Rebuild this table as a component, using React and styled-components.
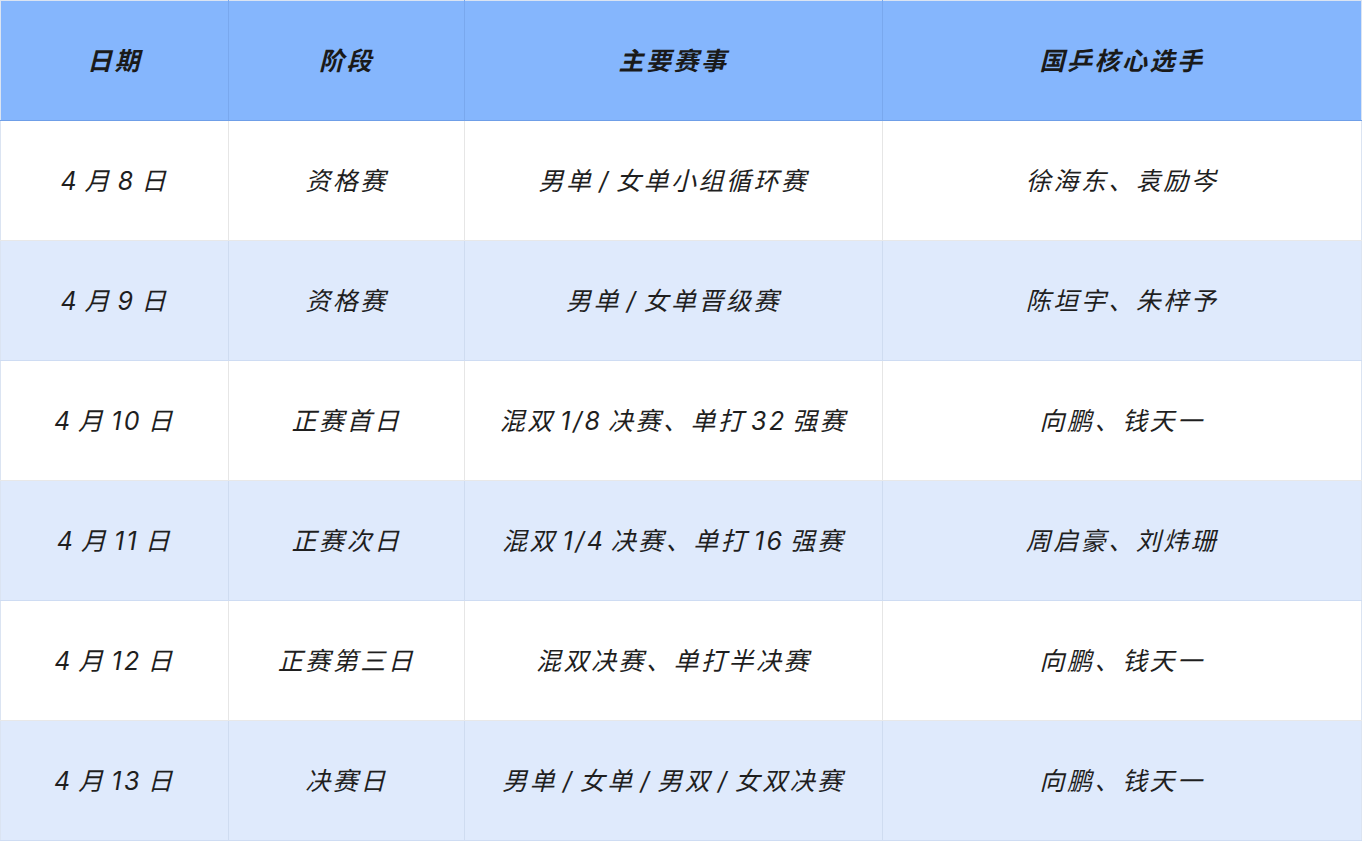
import React from 'react';
import styled, { createGlobalStyle } from 'styled-components';

const rows = [
    { date: '4 月 8 日', stage: '资格赛', event: '男单 / 女单小组循环赛', players: '徐海东、袁励岑' },
    { date: '4 月 9 日', stage: '资格赛', event: '男单 / 女单晋级赛', players: '陈垣宇、朱梓予' },
    { date: '4 月 10 日', stage: '正赛首日', event: '混双 1/8 决赛、单打 32 强赛', players: '向鹏、钱天一' },
    { date: '4 月 11 日', stage: '正赛次日', event: '混双 1/4 决赛、单打 16 强赛', players: '周启豪、刘炜珊' },
    { date: '4 月 12 日', stage: '正赛第三日', event: '混双决赛、单打半决赛', players: '向鹏、钱天一' },
    { date: '4 月 13 日', stage: '决赛日', event: '男单 / 女单 / 男双 / 女双决赛', players: '向鹏、钱天一' },
];

const App = () => {
    return (
        <>
            <GlobalStyle />
            <StyledTable>
                <colgroup>
                    <col style={{ width: 228 }} />
                    <col style={{ width: 236 }} />
                    <col style={{ width: 418 }} />
                    <col />
                </colgroup>
                <thead>
                    <tr>
                        <StyledHeadCell>日期</StyledHeadCell>
                        <StyledHeadCell>阶段</StyledHeadCell>
                        <StyledHeadCell>主要赛事</StyledHeadCell>
                        <StyledHeadCell>国乒核心选手</StyledHeadCell>
                    </tr>
                </thead>
                <tbody>
                    {rows.map((row, i) => (
                        <StyledRow key={row.date} $striped={i % 2 === 1}>
                            <StyledCell>{row.date}</StyledCell>
                            <StyledCell>{row.stage}</StyledCell>
                            <StyledCell>{row.event}</StyledCell>
                            <StyledCell>{row.players}</StyledCell>
                        </StyledRow>
                    ))}
                </tbody>
            </StyledTable>
        </>
    );
};

export default App;

// Styled Components

const GlobalStyle = createGlobalStyle`
    html, body {
        margin: 0;
        padding: 0;
        background: #ffffff;
    }

    body {
        font-family: Inter, "Noto Sans CJK SC", "Noto Sans", sans-serif;
        color: #1f1f1f;
    }
`;

const StyledTable = styled.table`
    width: 1362px;
    border-collapse: collapse;
    table-layout: fixed;
    border: 1px solid #dbe4f2;
`;

const StyledHeadCell = styled.th`
    box-sizing: border-box;
    height: 120px;
    padding: 0 0 4px;
    background-color: #85b6fd;
    border-left: 1px solid #79a8ee;
    border-bottom: 1px solid #6f9fe8;
    font-size: 25px;
    font-weight: 700;
    font-style: italic;
    letter-spacing: 2.5px;
    text-align: center;
    color: #1a1a1a;

    &:first-child {
        border-left: none;
    }
`;

const StyledRow = styled.tr`
    background-color: ${({ $striped }) => ($striped ? '#dfeafc' : '#ffffff')};

    td {
        border-left-color: ${({ $striped }) => ($striped ? '#cfdcf0' : '#e6e6e6')};
        border-bottom-color: ${({ $striped }) => ($striped ? '#cedcf3' : '#e8e8e8')};
    }
`;

const StyledCell = styled.td`
    box-sizing: border-box;
    height: 120px;
    padding: 0 0 4px;
    border-left: 1px solid;
    border-bottom: 1px solid;
    font-size: 25px;
    font-weight: 400;
    font-style: italic;
    letter-spacing: 2.5px;
    word-spacing: -4px;
    text-align: center;
    white-space: nowrap;

    &:first-child {
        border-left: none;
    }
`;
